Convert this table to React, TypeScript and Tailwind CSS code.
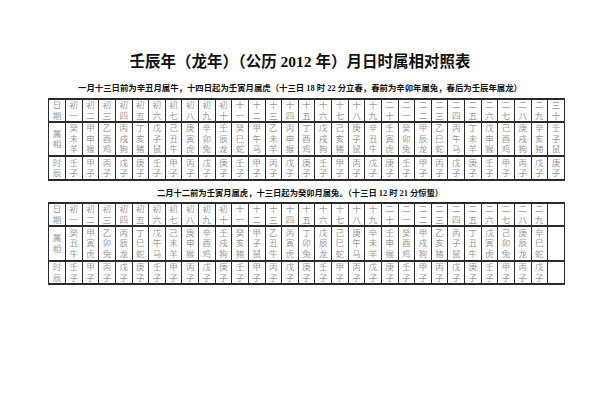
const GANZHI = [
  "甲子", "乙丑", "丙寅", "丁卯", "戊辰", "己巳", "庚午", "辛未", "壬申", "癸酉",
  "甲戌", "乙亥", "丙子", "丁丑", "戊寅", "己卯", "庚辰", "辛巳", "壬午", "癸未",
  "甲申", "乙酉", "丙戌", "丁亥", "戊子", "己丑", "庚寅", "辛卯", "壬辰", "癸巳",
  "甲午", "乙未", "丙申", "丁酉", "戊戌", "己亥", "庚子", "辛丑", "壬寅", "癸卯",
  "甲辰", "乙巳", "丙午", "丁未", "戊申", "己酉", "庚戌", "辛亥", "壬子", "癸丑",
  "甲寅", "乙卯", "丙辰", "丁巳", "戊午", "己未", "庚申", "辛酉", "壬戌", "癸亥",
]

const ANIMAL: Record<string, string> = {
  子: "鼠", 丑: "牛", 寅: "虎", 卯: "兔", 辰: "龙", 巳: "蛇",
  午: "马", 未: "羊", 申: "猴", 酉: "鸡", 戌: "狗", 亥: "猪",
}

// 子时 stem from the day stem
const ZISHI: Record<string, string> = {
  甲: "甲子", 己: "甲子", 乙: "丙子", 庚: "丙子", 丙: "戊子",
  辛: "戊子", 丁: "庚子", 壬: "庚子", 戊: "壬子", 癸: "壬子",
}

const DAY_NAMES = [
  "初一", "初二", "初三", "初四", "初五", "初六", "初七", "初八", "初九", "初十",
  "十一", "十二", "十三", "十四", "十五", "十六", "十七", "十八", "十九", "二十",
  "二一", "二二", "二三", "二四", "二五", "二六", "二七", "二八", "二九", "三十",
]

interface Day {
  name: string
  ganzhi: string
  shi: string
}

function buildMonth(start: string, count: number): (Day | null)[] {
  const idx = GANZHI.indexOf(start)
  const days: (Day | null)[] = []
  for (let i = 0; i < 30; i++) {
    if (i >= count) {
      days.push(null)
      continue
    }
    const gz = GANZHI[(idx + i) % 60]
    days.push({ name: DAY_NAMES[i], ganzhi: gz + ANIMAL[gz[1]], shi: ZISHI[gz[0]] })
  }
  return days
}

function Chars({ text, spread }: { text: string; spread?: boolean }) {
  return (
    <div className={`flex flex-col items-center h-full ${spread ? "justify-between py-[2px]" : "justify-center"}`}>
      {text.split("").map((c, i) => (
        <span key={i} className="block leading-[10.5px]">
          {c}
        </span>
      ))}
    </div>
  )
}

function MonthTable({ days, heights }: { days: (Day | null)[]; heights: [string, string, string] }) {
  const cell = "border-x border-y-2 border-[#2a2a2a] p-0 align-middle"
  return (
    <table className="table-fixed border-collapse w-[517px] ml-[48px] text-[8.5px] text-[#999]">
      <colgroup>
        <col className="w-[17px]" />
        {days.map((_, i) => (
          <col key={i} />
        ))}
      </colgroup>
      <tbody>
        <tr className={heights[0]}>
          <td className={cell}><Chars text="日期" /></td>
          {days.map((d, i) => (
            <td key={i} className={cell}>{d && <Chars text={d.name} />}</td>
          ))}
        </tr>
        <tr className={heights[1]}>
          <td className={cell}><Chars text="属相" spread /></td>
          {days.map((d, i) => (
            <td key={i} className={cell}>{d && <Chars text={d.ganzhi} />}</td>
          ))}
        </tr>
        <tr className={heights[2]}>
          <td className={cell}><Chars text="时辰" /></td>
          {days.map((d, i) => (
            <td key={i} className={cell}>{d && <Chars text={d.shi} />}</td>
          ))}
        </tr>
      </tbody>
    </table>
  )
}

export default function App() {
  const first = buildMonth("癸未", 30)
  const second = buildMonth("癸丑", 29)

  return (
    <div className="w-[600px] h-[400px] bg-white pt-[52px] font-['Liberation_Serif','Noto_Sans_CJK_SC',serif] text-[#111]">
      <h1 className="text-center text-[15.5px] leading-[20px] font-bold">
        壬辰年（龙年）（公历 2012 年）月日时属相对照表
      </h1>

      <p className="mt-[11px] mb-[3px] text-center text-[8.4px] leading-[12px] font-bold">
        一月十三日前为辛丑月属牛，十四日起为壬寅月属虎（十三日 18 时 22 分立春，春前为辛卯年属兔，春后为壬辰年属龙）
      </p>
      <MonthTable days={first} heights={["h-[22px]", "h-[34px]", "h-[24px]"]} />

      <p className="mt-[7px] mb-[2px] text-center text-[8.3px] leading-[12px] font-bold">
        二月十二前为壬寅月属虎，十三日起为癸卯月属兔。（十三日 12 时 21 分惊蛰）
      </p>
      <MonthTable days={second} heights={["h-[23px]", "h-[35px]", "h-[22px]"]} />
    </div>
  )
}
